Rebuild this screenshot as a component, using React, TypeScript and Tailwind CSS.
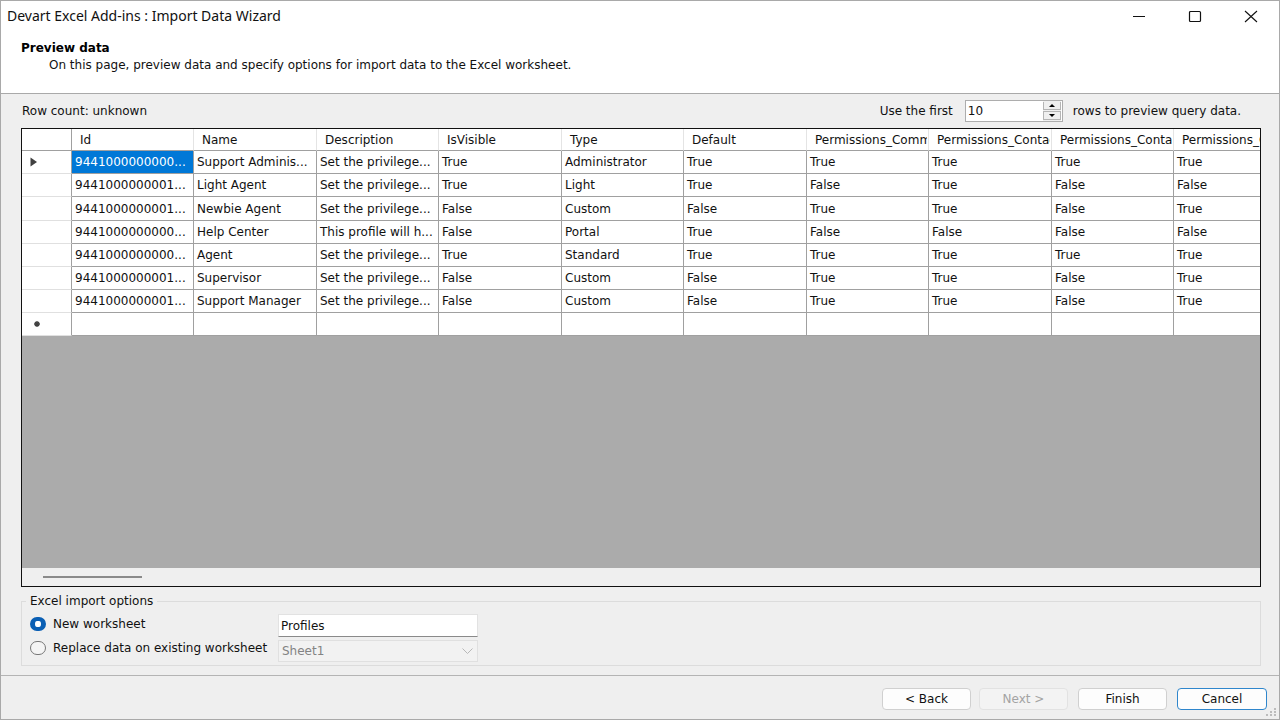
import { useState } from "react";

type Profile = {
  id: string;
  name: string;
  description: string;
  isVisible: string;
  type: string;
  isDefault: string;
  permissions: string[];
};

const columns = [
  "Id",
  "Name",
  "Description",
  "IsVisible",
  "Type",
  "Default",
  "Permissions_Commu",
  "Permissions_Contac",
  "Permissions_Contac",
  "Permissions_C",
];

const profiles: Profile[] = [
  { id: "9441000000000...", name: "Support Adminis...", description: "Set the privilege...", isVisible: "True", type: "Administrator", isDefault: "True", permissions: ["True", "True", "True", "True"] },
  { id: "9441000000001...", name: "Light Agent", description: "Set the privilege...", isVisible: "True", type: "Light", isDefault: "True", permissions: ["False", "True", "False", "False"] },
  { id: "9441000000001...", name: "Newbie Agent", description: "Set the privilege...", isVisible: "False", type: "Custom", isDefault: "False", permissions: ["True", "True", "False", "True"] },
  { id: "9441000000000...", name: "Help Center", description: "This profile will h...", isVisible: "False", type: "Portal", isDefault: "True", permissions: ["False", "False", "False", "False"] },
  { id: "9441000000000...", name: "Agent", description: "Set the privilege...", isVisible: "True", type: "Standard", isDefault: "True", permissions: ["True", "True", "True", "True"] },
  { id: "9441000000001...", name: "Supervisor", description: "Set the privilege...", isVisible: "False", type: "Custom", isDefault: "False", permissions: ["True", "True", "False", "True"] },
  { id: "9441000000001...", name: "Support Manager", description: "Set the privilege...", isVisible: "False", type: "Custom", isDefault: "False", permissions: ["True", "True", "False", "True"] },
];

function TitleBar() {
  return (
    <div className="flex h-[30px] shrink-0 items-center justify-between bg-white pl-[6px] pr-[21px]">
      <h1 className="font-['Noto_Sans',sans-serif] text-[14px] leading-5">Devart Excel Add-ins : Import Data Wizard</h1>
      <div className="flex items-center gap-[42px]">
        <button type="button" aria-label="Minimize">
          <svg className="h-[14px] w-[14px]" viewBox="0 0 14 14" fill="none" stroke="#111">
            <path d="M1 7.5h12" />
          </svg>
        </button>
        <button type="button" aria-label="Maximize">
          <svg className="h-[14px] w-[14px]" viewBox="0 0 14 14" fill="none" stroke="#111" strokeWidth="1.2">
            <rect x="1.5" y="2.5" width="11" height="10" rx="1" />
          </svg>
        </button>
        <button type="button" aria-label="Close">
          <svg className="h-[14px] w-[14px]" viewBox="0 0 14 14" fill="none" stroke="#111" strokeWidth="1.1">
            <path d="M1 2l12 11M13 2L1 13" />
          </svg>
        </button>
      </div>
    </div>
  );
}

function RowCountInput() {
  const [count, setCount] = useState(10);

  return (
    <div className="flex items-center">
      <label htmlFor="row-count">Use the first</label>
      <div className="ml-3 mr-[10px] flex h-[22px] w-[98px] border border-[#adadad] bg-white">
        <input
          id="row-count"
          type="text"
          inputMode="numeric"
          className="min-w-0 flex-1 bg-white pl-[2px] outline-none"
          value={count}
          onChange={(e) => setCount(Number(e.target.value) || 0)}
        />
        <div className="mr-px flex w-[18px] flex-col gap-px bg-[#efefef] py-px">
          <button
            type="button"
            aria-label="More rows"
            className="flex flex-1 items-center justify-center border-x border-b border-[#b4b4b4]"
            onClick={() => setCount(count + 1)}
          >
            <svg className="h-[3px] w-[6px]" viewBox="0 0 6 3">
              <path d="M3 0l3 3H0z" />
            </svg>
          </button>
          <button
            type="button"
            aria-label="Fewer rows"
            className="flex flex-1 items-center justify-center border border-[#b4b4b4]"
            onClick={() => setCount(Math.max(0, count - 1))}
          >
            <svg className="h-[3px] w-[6px]" viewBox="0 0 6 3">
              <path d="M3 3l3-3H0z" />
            </svg>
          </button>
        </div>
      </div>
      <span>rows to preview query data.</span>
    </div>
  );
}

function PreviewGrid() {
  return (
    <div className="flex min-h-0 flex-1 flex-col border border-[#111] bg-[#ababab]">
      <div className="min-h-0 flex-1 overflow-hidden">
        <table className="table-fixed w-[1275px] border-separate border-spacing-0 bg-white">
          <colgroup>
            <col className="w-[50px]" />
            {columns.map((_, i) => (
              <col key={i} className={i % 2 === 0 ? "w-[122px]" : "w-[123px]"} />
            ))}
          </colgroup>
          <thead>
            <tr className="h-[22px]">
              <th className="border-b border-r border-[#a0a0a0] p-0" />
              {columns.map((name, i) => (
                <th key={i} className="border-b border-r border-b-[#a0a0a0] border-r-[#e4e4e4] p-0 text-left font-normal">
                  <div className="mr-px overflow-hidden whitespace-nowrap pl-2">{name}</div>
                </th>
              ))}
            </tr>
          </thead>
          <tbody>
            {profiles.map((row, i) => (
              <tr key={i} className={i === 2 ? "h-[24px]" : "h-[23px]"}>
                <th className="border-b border-r border-b-[#e0e0e0] border-r-[#a0a0a0] p-0 pl-2">
                  {i === 0 && (
                    <svg className="block h-[10px] w-[7px]" viewBox="0 0 7 10" fill="#404040">
                      <path d="M0.500 0.500L7 5l-6.500 4.500z" />
                    </svg>
                  )}
                </th>
                {[row.id, row.name, row.description, row.isVisible, row.type, row.isDefault, ...row.permissions].map((value, j) => (
                  <td
                    key={j}
                    className={
                      i === 0 && j === 0
                        ? "whitespace-nowrap border-b border-r border-[#a0a0a0] bg-[#0078d7] p-0 pl-[3px] text-white"
                        : "whitespace-nowrap border-b border-r border-[#a0a0a0] p-0 pl-[3px]"
                    }
                  >
                    {value}
                  </td>
                ))}
              </tr>
            ))}
            <tr className="h-[23px]">
              <th className="border-b border-r border-b-[#e0e0e0] border-r-[#a0a0a0] p-0 pl-[11px]">
                <svg className="block h-[8px] w-[8px]" viewBox="0 0 8 8" stroke="#404040" strokeWidth="1.4">
                  <path d="M4 1v6M1 4h6M2 2l4 4M6 2L2 6" />
                </svg>
              </th>
              {columns.map((_, j) => (
                <td key={j} className="border-b border-r border-[#a0a0a0] p-0" />
              ))}
            </tr>
          </tbody>
        </table>
      </div>
      <div className="flex h-[18px] shrink-0 items-center bg-[#efefef] pl-[21px]">
        <div className="h-[2px] w-[99px] bg-[#8a8a8a]" />
      </div>
    </div>
  );
}

const radioClass =
  "mr-[7px] h-[14px] w-4 shrink-0 appearance-none rounded-full border border-[#777] bg-[#f4f4f4] checked:border-x-[5px] checked:border-y-4 checked:border-[#0a5fb4] checked:bg-white";

function ImportOptions() {
  const [target, setTarget] = useState("new");
  const [sheetName, setSheetName] = useState("Profiles");

  return (
    <fieldset className="mt-[6px] border border-[#dcdcdc] pb-[3px] pl-2">
      <legend className="-ml-1 px-1">Excel import options</legend>
      <div className="grid grid-cols-[248px_200px] items-start gap-y-[3px] pt-[5px]">
        <label className="flex h-5 items-center">
          <input
            type="radio"
            name="target"
            className={radioClass}
            checked={target === "new"}
            onChange={() => setTarget("new")}
          />
          New worksheet
        </label>
        <input
          type="text"
          aria-label="New worksheet name"
          className="h-[23px] border border-b-[#8a8a8a] border-[#e2e2e2] bg-white px-[2px] outline-none"
          value={sheetName}
          onChange={(e) => setSheetName(e.target.value)}
        />
        <label className="flex h-4 items-center">
          <input
            type="radio"
            name="target"
            className={radioClass}
            checked={target === "existing"}
            onChange={() => setTarget("existing")}
          />
          Replace data on existing worksheet
        </label>
        <div className="relative">
          <select
            aria-label="Existing worksheet"
            className="block h-[22px] w-full appearance-none border border-[#e0e0e0] bg-[#f2f2f2] px-[3px] text-[#838383] opacity-100"
            disabled={target !== "existing"}
          >
            <option>Sheet1</option>
          </select>
          <svg className="pointer-events-none absolute right-[5px] top-2 h-[6px] w-[11px]" viewBox="0 0 11 6" fill="none" stroke="#b8b8b8">
            <path d="M0.500 0.500l5 5 5-5" />
          </svg>
        </div>
      </div>
    </fieldset>
  );
}

const buttonClass = "h-[22px] w-[89px] rounded border border-[#d0d0d0] bg-[#fdfdfd]";

function Footer() {
  return (
    <footer className="relative flex h-[44px] shrink-0 items-center justify-end border-t border-[#b4b4b4] pb-px pr-3 pt-[3px]">
      <button type="button" className={buttonClass}>&lt; Back</button>
      <button type="button" disabled className="ml-2 h-[22px] w-[89px] rounded border border-[#e2e2e2] bg-[#f3f3f3] text-[#a3a3a3]">
        Next &gt;
      </button>
      <button type="button" className={`${buttonClass} ml-[10px]`}>Finish</button>
      <button type="button" className="ml-[10px] h-[22px] w-[90px] rounded border border-[#2f86cc] bg-[#fdfdfd]">
        Cancel
      </button>
      <svg className="absolute bottom-[2px] right-[2px] h-[9px] w-[11px]" viewBox="0 0 11 9" fill="#bcbcbc">
        <path d="M8 0h2v2H8zM4 3h2v2H4zM8 3h2v2H8zM0 6h2v2H0zM4 6h2v2H4zM8 6h2v2H8z" />
      </svg>
    </footer>
  );
}

export default function App() {
  return (
    <div className="flex h-screen flex-col border border-[#a9a9a9] bg-[#efefef] font-['DejaVu_Sans',sans-serif] text-[12px] leading-4 text-[#111]">
      <TitleBar />
      <header className="h-[63px] shrink-0 border-b border-[#a9a9a9] bg-white pl-5 pt-[9px]">
        <h2 className="font-bold text-black">Preview data</h2>
        <p className="pl-7 pt-px">On this page, preview data and specify options for import data to the Excel worksheet.</p>
      </header>
      <main className="flex min-h-0 flex-1 flex-col pb-[9px] pl-5 pr-[18px]">
        <div className="flex h-[34px] shrink-0 items-center justify-between pl-px pr-5">
          <p>Row count: unknown</p>
          <RowCountInput />
        </div>
        <PreviewGrid />
        <ImportOptions />
      </main>
      <Footer />
    </div>
  );
}
